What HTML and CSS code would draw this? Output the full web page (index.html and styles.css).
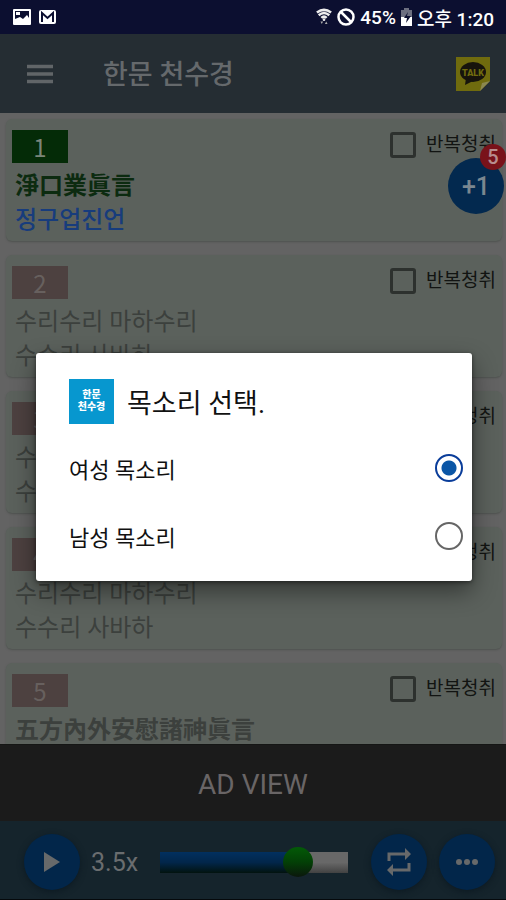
FILE: index.html
```html
<!DOCTYPE html>
<html lang="ko">
<head>
<meta charset="utf-8">
<meta name="viewport" content="width=device-width, initial-scale=1">
<title>한문 천수경</title>
<link rel="stylesheet" href="styles.css">
</head>
<body>
<div class="status">
  <svg width="20" height="18" viewBox="0 0 20 18" aria-hidden="true"><rect x="1" y="1" width="18" height="16" rx="1" fill="#fff"/><path d="M3 3h14v7l-2-3-4 4-3-2-5 2z" fill="#0c0f30"/><path d="M4 4h4v3H4z" fill="#fff"/><path d="M3 12l5-2 3 2 4-4 2 3v4H3z" fill="#fff"/></svg>
  <svg width="19" height="18" viewBox="0 0 19 18" aria-hidden="true"><rect x="1" y="2" width="17" height="14" rx="2" fill="#fff"/><path d="M4 14V5l5.500 5L15 5v9" fill="none" stroke="#0c0f30" stroke-width="2"/></svg>
  <span class="grow"></span>
  <svg width="16" height="20" viewBox="0 0 18 20" aria-hidden="true"><path d="M1 5q8-6 16 0M3 8q6-5 12 0M6 11q3-3 6 0" fill="none" stroke="#eee" stroke-width="2.800"/><circle cx="9" cy="13" r="1.500" fill="#eee"/><path d="M5 15h3l-1.500 3zM10 18h3l-1.500-3z" fill="#aaa"/></svg>
  <svg width="20" height="20" viewBox="0 0 20 20" aria-hidden="true"><circle cx="10" cy="10" r="7.500" fill="none" stroke="#fff" stroke-width="2.500"/><path d="M5 5l10 10" stroke="#fff" stroke-width="2.500"/></svg>
  <span class="percent">45%</span>
  <svg width="13" height="20" viewBox="0 0 13 20" aria-hidden="true"><path d="M4 1h5v2h3v8H1V3h3z" fill="#6d6f80"/><path d="M1 10h11v9H1z" fill="#fff"/><path d="M8 5l-4 6h3l-1 5 5-7H7z" fill="#0c0f30"/></svg>
  <span class="clock">오후 1:20</span>
</div>

<header class="toolbar">
  <button class="plain" aria-label="메뉴"><svg width="28" height="20" viewBox="0 0 28 20"><path d="M1 2.500h26M1 10h26M1 17.500h26" stroke="#616568" stroke-width="3.500"/></svg></button>
  <h1>한문 천수경</h1>
  <button class="plain" aria-label="카카오톡"><svg width="36" height="36" viewBox="0 0 36 36"><path d="M1 1h34v24L25 35H1z" fill="#706b0e"/><path d="M35 25L25 35l2-8z" fill="#8b8850"/><ellipse cx="18" cy="16" rx="13" ry="10" fill="#17140c"/><path d="M11 22l-1 7 8-4z" fill="#17140c"/><text x="18" y="20" text-anchor="middle" class="talk">TALK</text></svg></button>
</header>

<main class="list">
  <article class="card">
    <div class="card-top"><span class="num active">1</span><label class="repeat"><input type="checkbox">반복청취</label></div>
    <p class="hanja green">淨口業眞言</p>
    <p class="blue">정구업진언</p>
  </article>
  <article class="card">
    <div class="card-top"><span class="num">2</span><label class="repeat"><input type="checkbox">반복청취</label></div>
    <p>수리수리 마하수리</p>
    <p>수수리 사바하</p>
  </article>
  <article class="card">
    <div class="card-top"><span class="num">3</span><label class="repeat"><input type="checkbox">반복청취</label></div>
    <p>수리수리 마하수리</p>
    <p>수수리 사바하</p>
  </article>
  <article class="card">
    <div class="card-top"><span class="num">4</span><label class="repeat"><input type="checkbox">반복청취</label></div>
    <p>수리수리 마하수리</p>
    <p>수수리 사바하</p>
  </article>
  <article class="card">
    <div class="card-top"><span class="num">5</span><label class="repeat"><input type="checkbox">반복청취</label></div>
    <p class="hanja">五方內外安慰諸神眞言</p>
  </article>
  <button class="fab">+1<span class="count">5</span></button>
</main>

<div class="ad">AD VIEW</div>

<footer class="player">
  <button class="round" aria-label="재생"><svg width="18" height="22" viewBox="0 0 18 22"><path d="M1 1l16 10L1 21z" fill="#67696a"/></svg></button>
  <label class="speed" for="speed">3.5x</label>
  <input id="speed" type="range" min="0" max="100" value="78">
  <button class="round" aria-label="반복"><svg width="28" height="28" viewBox="0 0 28 28"><path d="M4 13V6h17M24 15v7H7" fill="none" stroke="#67696a" stroke-width="3"/><path d="M20 0l6 6-6 6zM8 16l-6 6 6 6z" fill="#67696a"/></svg></button>
  <button class="round" aria-label="더보기"><svg width="24" height="8" viewBox="0 0 24 8"><g fill="#67696a"><circle cx="4" cy="4" r="3"/><circle cx="12" cy="4" r="3"/><circle cx="20" cy="4" r="3"/></g></svg></button>
</footer>

<div class="scrim">
  <section class="dialog" role="dialog" aria-labelledby="voice-title">
    <div class="dialog-head"><span class="logo">한문<br>천수경</span><h2 id="voice-title">목소리 선택.</h2></div>
    <label class="option">여성 목소리<input type="radio" name="voice" checked></label>
    <label class="option">남성 목소리<input type="radio" name="voice"></label>
  </section>
</div>
</body>
</html>
```
FILE: styles.css
```css
* { box-sizing: border-box; }

body {
  margin: 0;
  height: 100vh;
  display: flex;
  flex-direction: column;
  overflow: hidden;
  background: #636363;
  font-family: Roboto, "Noto Sans CJK KR", sans-serif;
}

h1, h2, p { margin: 0; font-weight: 400; }

button {
  border: 0;
  padding: 0;
  font: inherit;
}

.status {
  display: flex;
  align-items: center;
  gap: 4px;
  height: 34px;
  flex: none;
  padding: 0 12px;
  background: #0c0f30;
  color: #fff;
  font-size: 19px;
  font-weight: 500;
  white-space: nowrap;
}

.status svg:first-child { margin-right: 2px; }

.grow { flex: 1; }

.toolbar {
  display: flex;
  align-items: center;
  height: 79px;
  flex: none;
  padding: 0 15px 0 26px;
  background: #252d33;
  color: #65696c;
}

.toolbar h1 {
  flex: 1;
  margin-left: 49px;
  padding-top: 2px;
  font-size: 27px;
  line-height: 40px;
  font-weight: 500;
}

.plain {
  display: flex;
  background: none;
}

.talk {
  font: 900 9px Roboto, sans-serif;
  fill: #706b0e;
}

.list {
  position: relative;
  flex: 1;
  min-height: 0;
  overflow: hidden;
  display: flex;
  flex-direction: column;
  gap: 14px;
  padding: 6px 4px 0 6px;
}

.card {
  flex: none;
  padding: 11px 6px 4px;
  border-radius: 6px;
  background: #5b615c;
  box-shadow: 0 1px 2px #4e524f;
  color: #3c403d;
  font-size: 24px;
  line-height: 34px;
}

.card p { padding-left: 3px; }
.card .hanja { font-weight: 700; }
.card .green { color: #0c2b10; }
.card .blue { color: #173c7c; font-weight: 500; }

.card-top {
  display: flex;
  justify-content: space-between;
  height: 33px;
  margin-bottom: 6px;
}

.num {
  width: 56px;
  background: #4d4140;
  color: #67605e;
  text-align: center;
  font-family: "Noto Sans CJK KR", sans-serif;
}

.num.active { background: #042b07; color: #7b8579; }

.repeat {
  display: flex;
  align-items: center;
  gap: 10px;
  height: 30px;
  color: #121412;
  font-size: 19px;
}

.repeat input {
  appearance: none;
  width: 26px;
  height: 26px;
  margin: 0;
  border: 3px solid #2d312e;
  border-radius: 3px;
}

.fab {
  position: absolute;
  top: 45px;
  right: 2px;
  width: 56px;
  height: 56px;
  border-radius: 50%;
  background: #03294f;
  color: #7b8790;
  font-size: 25px;
  font-weight: 500;
}

.count {
  position: absolute;
  top: -14px;
  right: -2px;
  width: 26px;
  height: 26px;
  border-radius: 50%;
  background: #79121a;
  color: #b78c8e;
  font-size: 20px;
  line-height: 27px;
}

.ad {
  flex: none;
  height: 77px;
  background: #1b1b1b;
  border-top: 1px solid #151615;
  color: #696566;
  font-size: 28px;
  line-height: 80px;
  text-align: center;
}

.player {
  display: flex;
  align-items: center;
  flex: none;
  height: 79px;
  padding: 4px 11px 0 24px;
  border-bottom: 1px solid #05090c;
  background: #15242c;
}

.round {
  display: flex;
  align-items: center;
  justify-content: center;
  flex: none;
  width: 56px;
  height: 56px;
  border-radius: 50%;
  background: #02264a;
  box-shadow: 0 2px 6px #0d1a22;
}

.round + .round { margin-left: 12px; }

.speed {
  margin-left: 11px;
  width: 69px;
  color: #6a6d6f;
  font-size: 25px;
}

#speed {
  appearance: none;
  flex: 1;
  min-width: 0;
  height: 30px;
  margin: 0 23px 0 0;
  background: none;
}

#speed::-webkit-slider-runnable-track {
  height: 21px;
  background:
    linear-gradient(#02305f, #02264a 50%, #02130f) left / 75% 100% no-repeat,
    linear-gradient(#686868, #686868 50%, #424242);
}

#speed::-webkit-slider-thumb {
  appearance: none;
  width: 30px;
  height: 30px;
  margin-top: -5px;
  border-radius: 50%;
  background: linear-gradient(#035a07, #034006 50%, #0b170c);
}

.scrim {
  position: absolute;
  inset: 34px 0 0;
  display: flex;
  align-items: center;
  padding: 0 34px 0 36px;
}

.dialog {
  flex: 1;
  padding: 15px 9px 11px 33px;
  border-radius: 3px;
  background: #fff;
  box-shadow: 0 10px 24px rgba(0, 0, 0, .45), 0 1px 4px rgba(0, 0, 0, .5);
  color: #111;
}

.dialog-head {
  display: flex;
  align-items: center;
  gap: 13px;
  height: 66px;
}

.dialog h2 { font-size: 27px; }

.logo {
  width: 45px;
  height: 45px;
  padding-top: 10px;
  background: #0797cf;
  color: #fff;
  font-size: 10px;
  font-weight: 900;
  line-height: 12px;
  text-align: center;
}

.option {
  display: flex;
  align-items: center;
  justify-content: space-between;
  height: 68px;
  font-size: 22px;
}

.option input {
  appearance: none;
  width: 28px;
  height: 28px;
  margin: 0;
  border: 2px solid #666;
  border-radius: 50%;
}

.option input:checked {
  border-color: #0a3d9a;
  background: radial-gradient(circle, #0b56a6 7px, transparent 8px);
}
```
